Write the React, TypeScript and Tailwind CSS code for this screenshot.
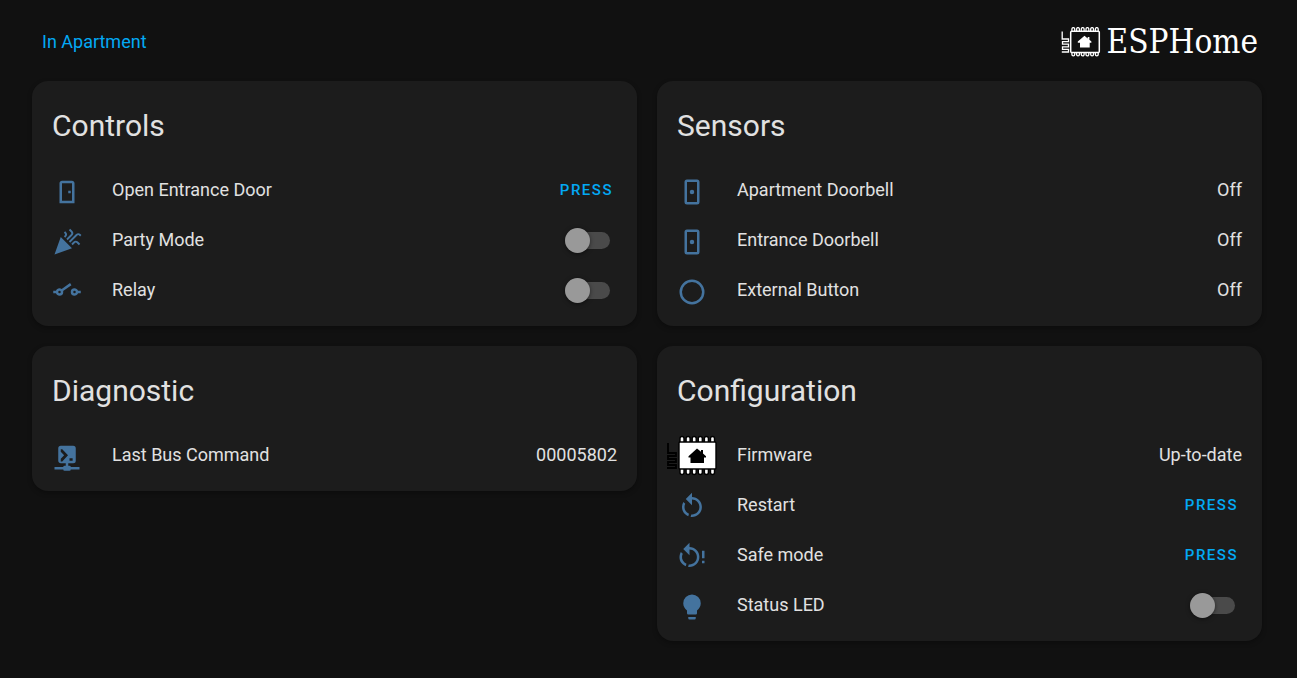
import type { ReactNode } from 'react';

const icons = {
  door: 'M8,3C6.89,3 6,3.89 6,5V21H18V5C18,3.89 17.11,3 16,3H8M8,5H16V19H8V5M13,11V13H15V11H13Z',
  party:
    'M2 22l14-5-9-9zM14.53 12.53l5.59-5.59a1.25 1.25 0 011.77 0l.59.59 1.06-1.06-.59-.59a2.758 2.758 0 00-3.89 0l-5.59 5.59 1.06 1.06zM10.06 6.88l-.59.59 1.06 1.06.59-.59a2.758 2.758 0 000-3.89l-.59-.59-1.06 1.07.59.59c.48.48.48 1.28 0 1.76zM17.06 11.88l-1.59 1.59 1.06 1.06 1.59-1.59a1.25 1.25 0 011.77 0l1.61 1.61 1.06-1.06-1.61-1.61a2.758 2.758 0 00-3.89 0zM15.06 5.88l-3.59 3.59 1.06 1.06 3.59-3.59a2.758 2.758 0 000-3.89l-1.59-1.59-1.06 1.06 1.59 1.59c.48.49.48 1.29 0 1.78z',
  relay:
    'M1,11H3.17C3.58,9.83 4.69,9 6,9C6.65,9 7.25,9.21 7.74,9.56L14.44,4.87L15.58,6.5L8.89,11.2C8.96,11.45 9,11.72 9,12A3,3 0 0,1 6,15C4.69,15 3.58,14.17 3.17,13H1V11M23,11V13H20.83C20.42,14.17 19.31,15 18,15A3,3 0 0,1 15,12A3,3 0 0,1 18,9C19.31,9 20.42,9.83 20.83,11H23M6,11A1,1 0 0,0 5,12A1,1 0 0,0 6,13A1,1 0 0,0 7,12A1,1 0 0,0 6,11M18,11A1,1 0 0,0 17,12A1,1 0 0,0 18,13A1,1 0 0,0 19,12A1,1 0 0,0 18,11Z',
  doorbell:
    'M8,2H16A2,2 0 0,1 18,4V20A2,2 0 0,1 16,22H8A2,2 0 0,1 6,20V4A2,2 0 0,1 8,2M8,4V20H16V4H8M12,10.200A1.800,1.800 0 0,1 12,13.800A1.800,1.800 0 0,1 12,10.200Z',
  circle:
    'M12,20A8,8 0 0,1 4,12A8,8 0 0,1 12,4A8,8 0 0,1 20,12A8,8 0 0,1 12,20M12,2A10,10 0 0,0 2,12A10,10 0 0,0 12,22A10,10 0 0,0 22,12A10,10 0 0,0 12,2Z',
  console:
    'M17,3A2,2 0 0,1 19,5V15A2,2 0 0,1 17,17H13V19H14A1,1 0 0,1 15,20H22V22H15A1,1 0 0,1 14,23H10A1,1 0 0,1 9,22H2V20H9A1,1 0 0,1 10,19H11V17H7C5.89,17 5,16.1 5,15V5A2,2 0 0,1 7,3H17M14,13V15H16.500V13H14M9.700,10.500L7,13.300V15.500H8.200L12.800,10.500L8.200,5.800H7V7.700L9.700,10.500Z',
  restart:
    'M12,4C14.1,4 16.1,4.8 17.6,6.3C20.7,9.4 20.7,14.5 17.6,17.6C15.8,19.5 13.3,20.2 10.9,19.9L11.4,17.9C13.1,18.1 14.9,17.5 16.2,16.2C18.5,13.9 18.5,10.1 16.2,7.7C15.1,6.6 13.5,6 12,6V10.6L7,5.6L12,0.6V4M6.3,17.6C3.7,15 3.3,11 5.1,7.9L6.6,9.4C5.5,11.6 5.9,14.4 7.8,16.2C8.3,16.7 8.9,17.1 9.6,17.4L9,19.4C8,19 7.1,18.4 6.3,17.6Z',
  restartAlert:
    'M10,4C12.1,4 14.1,4.8 15.6,6.3C18.7,9.4 18.7,14.5 15.6,17.6C13.8,19.5 11.3,20.2 8.9,19.9L9.4,17.9C11.1,18.1 12.9,17.5 14.2,16.2C16.5,13.9 16.5,10.1 14.2,7.7C13.1,6.6 11.5,6 10,6V10.6L5,5.6L10,0.6V4M4.3,17.6C1.7,15 1.3,11 3.1,7.9L4.6,9.4C3.5,11.6 3.9,14.4 5.8,16.2C6.3,16.7 6.9,17.1 7.6,17.4L7,19.4C6,19 5.1,18.4 4.3,17.6ZM20,7H22V13H20ZM20,15H22V17H20Z',
  bulb: 'M12,2A7,7 0 0,0 5,9C5,11.38 6.19,13.47 8,14.74V17A1,1 0 0,0 9,18H15A1,1 0 0,0 16,17V14.74C17.81,13.47 19,11.38 19,9A7,7 0 0,0 12,2M9,21A1,1 0 0,0 10,22H14A1,1 0 0,0 15,21V20H9V21Z',
};

function Icon({ name }: { name: keyof typeof icons }) {
  return (
    <svg viewBox="0 0 24 24" className="mt-1 size-[30px] shrink-0 fill-[#44739e]" fillRule="evenodd" aria-hidden="true">
      <path d={icons[name]} />
    </svg>
  );
}

const pins = [0, 1, 2, 3, 4, 5];

function BrandMark() {
  return (
    <svg viewBox="0 0 40 30" className="h-[30px] w-10" fill="none" stroke="#fff" aria-hidden="true">
      <rect x="9.7" y="4.2" width="28.600" height="21.200" rx="1" strokeWidth="1.5" />
      {pins.map((i) => (
        <path
          key={i}
          d={`M${10.9 + i * 4.7} 4V2a1.400 1.400 0 0 1 2.800 0V4M${10.9 + i * 4.7} 25.500v2a1.400 1.400 0 0 0 2.800 0V25.500`}
          strokeWidth="1.3"
        />
      ))}
      <path d="M1.200 4.500v7.500h6.300v2.600H1.500v2.600h6v2.600h-6v2.600h6v2.600H.8" strokeWidth="1.300" />
      <path d="M23.500 8.700l3.200 2.700V9.900h1.700v2.900l2 1.700v1.300h-1.700v4.700H19v-4.700h-2.200v-1.300z" fill="#fff" stroke="none" />
    </svg>
  );
}

function FirmwareIcon() {
  return (
    <svg viewBox="0 0 52 42" className="-ml-3 h-[42px] w-[52px] shrink-0" aria-hidden="true">
      <path d="M3 9v10h8v3H3v3h8v3H3v3h8v3H2" fill="none" stroke="#000" strokeWidth="1.800" />
      {pins.map((i) => (
        <rect key={i} x={15 + i * 6.1} y="2.5" width="4" height="38" rx="2" fill="#fff" stroke="#000" strokeWidth="1.400" />
      ))}
      <rect x="14" y="8" width="37" height="27" rx="1" fill="#fff" stroke="#000" strokeWidth="1.400" />
      <path d="M32 14.500l4 3.300V16h2v3.500l3 2.700v1.300h-2V29H25.500v-5.500H23.500v-1.300z" fill="#000" />
    </svg>
  );
}

function Card({ title, children }: { title: string; children: ReactNode }) {
  return (
    <section className="rounded-2xl bg-[#1c1c1c] px-5 pt-[25px] pb-[11px] shadow-[0_2px_5px_rgba(0,0,0,0.3)]">
      <h2 className="mb-[19px] text-[30px] leading-10">{title}</h2>
      <ul>{children}</ul>
    </section>
  );
}

function Row({ icon, label, id, children }: { icon: ReactNode; label: string; id?: string; children: ReactNode }) {
  return (
    <li className="flex h-[50px] items-center">
      <span className="flex w-[60px] shrink-0 items-center">{icon}</span>
      {id ? (
        <label htmlFor={id} className="grow">
          {label}
        </label>
      ) : (
        <span className="grow">{label}</span>
      )}
      {children}
    </li>
  );
}

function Press({ label }: { label: string }) {
  return (
    <button
      type="button"
      aria-label={`Press ${label}`}
      className="cursor-pointer px-1 text-[15px] font-medium tracking-[1.5px] text-[#03a9f4] uppercase"
    >
      Press
    </button>
  );
}

function Toggle({ id }: { id: string }) {
  return (
    <input
      id={id}
      type="checkbox"
      role="switch"
      className="mr-[7px] flex h-[17px] w-[45px] shrink-0 cursor-pointer appearance-none items-center rounded-full bg-[#4a4a4a] before:size-[25px] before:shrink-0 before:rounded-full before:bg-[#999] before:shadow-[0_1px_4px_rgba(0,0,0,0.5)] checked:before:ml-5 checked:before:bg-[#03a9f4]"
    />
  );
}

export default function App() {
  return (
    <div className="min-h-screen bg-[#111] pr-[35px] pb-9 pl-8 font-['Roboto',sans-serif] text-[18px] leading-6 text-[#e1e1e1]">
      <header className="flex h-[81px] items-center justify-between pt-[3px] pr-1 pl-[10px]">
        <a href="#" className="text-[#03a9f4]">
          In Apartment
        </a>
        <a
          href="#"
          className="flex items-center gap-[6px] font-['DejaVu_Serif_Condensed','DejaVu_Serif',serif] text-[33px] leading-10 text-white"
        >
          <BrandMark />
          ESPHome
        </a>
      </header>
      <main className="grid grid-cols-1 items-start gap-5 md:grid-cols-2">
        <Card title="Controls">
          <Row icon={<Icon name="door" />} label="Open Entrance Door">
            <Press label="Open Entrance Door" />
          </Row>
          <Row icon={<Icon name="party" />} label="Party Mode" id="party-mode">
            <Toggle id="party-mode" />
          </Row>
          <Row icon={<Icon name="relay" />} label="Relay" id="relay">
            <Toggle id="relay" />
          </Row>
        </Card>
        <Card title="Sensors">
          <Row icon={<Icon name="doorbell" />} label="Apartment Doorbell">
            <span>Off</span>
          </Row>
          <Row icon={<Icon name="doorbell" />} label="Entrance Doorbell">
            <span>Off</span>
          </Row>
          <Row icon={<Icon name="circle" />} label="External Button">
            <span>Off</span>
          </Row>
        </Card>
        <Card title="Diagnostic">
          <Row icon={<Icon name="console" />} label="Last Bus Command">
            <span>00005802</span>
          </Row>
        </Card>
        <Card title="Configuration">
          <Row icon={<FirmwareIcon />} label="Firmware">
            <span>Up-to-date</span>
          </Row>
          <Row icon={<Icon name="restart" />} label="Restart">
            <Press label="Restart" />
          </Row>
          <Row icon={<Icon name="restartAlert" />} label="Safe mode">
            <Press label="Safe mode" />
          </Row>
          <Row icon={<Icon name="bulb" />} label="Status LED" id="status-led">
            <Toggle id="status-led" />
          </Row>
        </Card>
      </main>
    </div>
  );
}
